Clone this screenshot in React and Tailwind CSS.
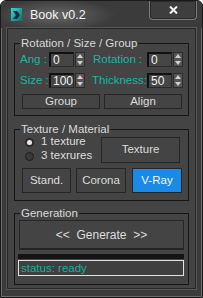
import React from 'react';

const font = { fontFamily: '"Liberation Sans", Arial, sans-serif' };

function Spinner() {
    return (
        <div className="shrink-0 w-[10px] h-[15px] bg-[#555] border border-[#2c2c2c] flex flex-col items-center justify-around">
            <svg width="6" height="4" viewBox="0 0 6 4"><path d="M3 0 L6 4 L0 4 Z" fill="#d0d0d0" /></svg>
            <svg width="6" height="4" viewBox="0 0 6 4"><path d="M0 0 L6 0 L3 4 Z" fill="#d0d0d0" /></svg>
        </div>
    );
}

function NumField({ value }) {
    return (
        <div className="shrink-0 flex items-center gap-[1px]">
            <div className="shrink-0 w-[25px] h-[15px] bg-[#464646] border-t-2 border-l-2 border-b border-r border-t-[#111] border-l-[#111] border-b-[#2a2a2a] border-r-[#2a2a2a] text-[12px] leading-[12px] text-[#f0f0f0] pl-[2px]">
                {value}
            </div>
            <Spinner />
        </div>
    );
}

function Btn({ children, className = '' }) {
    return (
        <div className={`shrink-0 whitespace-nowrap flex items-center justify-center border border-[#262626] text-[11.5px] text-[#dcdcdc] ${className}`}>
            {children}
        </div>
    );
}

function Radio({ checked, label }) {
    return (
        <div className="flex items-center h-[14px] whitespace-nowrap">
            <div className="shrink-0 w-[9px] h-[9px] rounded-full border border-[#1e1e1e] bg-[#3a3a3a] flex items-center justify-center ml-[3px]">
                {checked && <div className="w-[5px] h-[5px] rounded-full bg-[#e8e8e8]" />}
            </div>
            <span className="ml-[7px] text-[11.5px] text-[#dcdcdc]">{label}</span>
        </div>
    );
}

function Group({ title, children, className = '' }) {
    return (
        <fieldset className={`border border-[#161616] mx-[6px] ${className}`}>
            <legend className="ml-[5px] px-[1px] text-[11.5px] leading-[14px] text-[#d8d8d8] whitespace-nowrap">{title}</legend>
            {children}
        </fieldset>
    );
}

export default function App() {
    return (
        <div style={font} className="w-[203px] h-[298px] bg-[#3b3b3b] rounded-t-[6px] border border-[#1a1a1a] shadow-[inset_0_0_0_1px_#6a6a6a] flex flex-col overflow-hidden">
            {/* Title bar */}
            <div className="h-[27px] shrink-0 flex items-start bg-[radial-gradient(ellipse_60px_16px_at_55px_14px,#666,#3b3b3b)]">
                <div className="mt-[7px] ml-[10px] w-[11px] h-[13px] bg-gradient-to-br from-[#3fd6d0] to-[#0c6f73] flex items-center justify-center">
                    <svg width="7" height="8" viewBox="0 0 7 8"><path d="M0 0 L4 0 L7 4 L4 8 L0 8 L3 4 Z" fill="#0a2f33" /></svg>
                </div>
                <span className="ml-[8px] mt-[7px] text-[12.5px] leading-[15px] text-[#f2f2f2]">Book v0.2</span>
                <div className="ml-auto mr-[5px] w-[48px] h-[19px] border border-t-0 border-[#7a7a7a] rounded-b-[4px] bg-[#3e3e3e] flex items-center justify-center shadow-[inset_0_0_0_1px_#2a2a2a]">
                    <svg width="9" height="8" viewBox="0 0 9 8"><path d="M1 0.5 L8 7.5 M8 0.5 L1 7.5" stroke="#f4f4f4" strokeWidth="2" /></svg>
                </div>
            </div>

            {/* Client area */}
            <div className="mx-[6px] h-[261px] shrink-0 bg-[#444444] border border-[#262626] shadow-[0_0_0_1px_#585858] pt-[7px] flex flex-col">
                <Group title="Rotation / Size / Group">
                    <div className="pt-[2px] pl-[5px] pb-[6px] flex flex-col">
                        <div className="flex items-center h-[15px] whitespace-nowrap">
                            <span className="shrink-0 w-[29px] text-[11.5px] text-[#1fb3a3]">Ang :</span>
                            <NumField value="0" />
                            <span className="shrink-0 w-[62px] pl-[8px] pr-[5px] flex justify-between text-[11.5px] text-[#1fb3a3]"><span>Rotation</span><span>:</span></span>
                            <NumField value="0" />
                        </div>
                        <div className="flex items-center h-[15px] mt-[6px] whitespace-nowrap">
                            <span className="shrink-0 w-[29px] text-[11.5px] text-[#1fb3a3]">Size :</span>
                            <NumField value="100" />
                            <span className="shrink-0 w-[62px] pl-[7px] pr-[5px] flex justify-between text-[11.5px] text-[#1fb3a3]"><span>Thickness</span><span>:</span></span>
                            <NumField value="50" />
                        </div>
                        <div className="flex mt-[6px] pl-[2px] gap-[4px]">
                            <Btn className="w-[78px] h-[15px]">Group</Btn>
                            <Btn className="w-[78px] h-[15px]">Align</Btn>
                        </div>
                    </div>
                </Group>

                <Group title="Texture / Material" className="mt-[6px]">
                    <div className="pt-[1px] pl-[7px] pb-[7px] flex flex-col">
                        <div className="flex h-[26px]">
                            <div className="flex flex-col -mt-[2px] w-[79px] shrink-0">
                                <Radio checked label="1 texture" />
                                <Radio label="3 texrures" />
                            </div>
                            <Btn className="w-[79px] h-[26px]">Texture</Btn>
                        </div>
                        <div className="flex mt-[5px] gap-[5px]">
                            <Btn className="w-[49px] h-[25px]">Stand.</Btn>
                            <Btn className="w-[50px] h-[25px]">Corona</Btn>
                            <Btn className="w-[50px] h-[25px] bg-[#1a8ae6] border-[#2a2a2a] text-[#f4f4f4] ml-[1px]">V-Ray</Btn>
                        </div>
                    </div>
                </Group>

                <Group title="Generation" className="mt-[5px]">
                    <div className="pt-[0px] pl-[4px] pb-[8px] flex flex-col">
                        <Btn className="w-[165px] h-[30px] text-[12px] border-[#2e2e2e] shadow-[inset_0_-1px_0_#222]">&lt;&lt;&nbsp; Generate &nbsp;&gt;&gt;</Btn>
                        <div className="mt-[4px] ml-[-1px] w-[166px] h-[5px] bg-[#141414]" />
                        <div className="mt-[1px] ml-[-1px] w-[166px] h-[16px] border border-[#e0e0e0] bg-[#3f3f3f] text-[11.5px] leading-[14px] text-[#17b09e] pl-[2px]">
                            status: ready
                        </div>
                    </div>
                </Group>
            </div>
        </div>
    );
}
